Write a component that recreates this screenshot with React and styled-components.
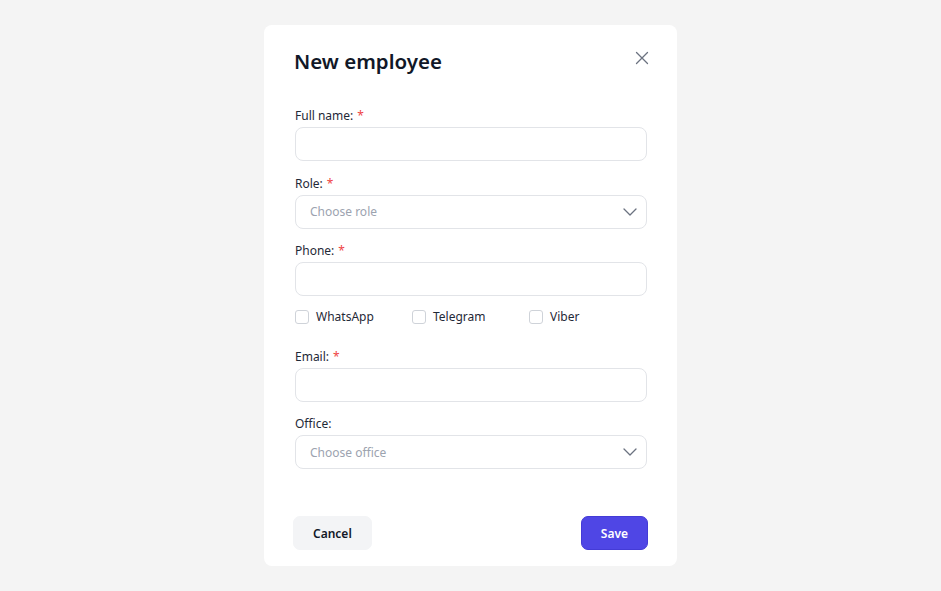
import styled, { createGlobalStyle } from "styled-components";

const GlobalStyle = createGlobalStyle`
  html, body {
    margin: 0;
    padding: 0;
    background: #f4f4f4;
    font-family: "Noto Sans", "Open Sans", sans-serif;
  }
  * { box-sizing: border-box; }
`;

const Page = styled.div`
  width: 941px;
  height: 591px;
  display: flex;
  justify-content: center;
  padding-top: 25px;
`;

const Modal = styled.div`
  width: 413px;
  height: 541px;
  background: #fff;
  border-radius: 8px;
  padding: 22px 30px 16px 30px;
  display: flex;
  flex-direction: column;
`;

const Header = styled.div`
  display: flex;
  align-items: center;
  justify-content: space-between;
  height: 28px;
  margin-bottom: 31px;
`;

const Title = styled.h2`
  margin: 0;
  font-size: 20.5px;
  font-weight: 600;
  color: #111827;
  line-height: 28px;
`;

const CloseButton = styled.button`
  border: 0;
  background: none;
  padding: 0;
  width: 14px;
  height: 14px;
  margin-right: -2px;
  margin-top: -6px;
  color: #6b7280;
  display: flex;
  cursor: pointer;
`;

const Form = styled.div`
  display: flex;
  flex-direction: column;
  gap: 12.5px;
  padding-left: 1px;
`;

const Field = styled.div`
  display: flex;
  flex-direction: column;
  gap: 2px;
`;

const Label = styled.label`
  font-size: 12px;
  line-height: 18px;
  padding-top: 1px;
  color: #1f2937;
`;

const Required = styled.span`
  color: #ef4444;
  margin-left: 4px;
`;

const Input = styled.input`
  width: 352px;
  height: 34px;
  border: 1px solid #e2e4e8;
  border-radius: 8px;
  padding: 0 14px;
  font-family: inherit;
  font-size: 12px;
  outline: none;
`;

const Select = styled.div`
  width: 352px;
  height: 34px;
  border: 1px solid #e2e4e8;
  border-radius: 8px;
  padding: 0 9px 0 14px;
  display: flex;
  align-items: center;
  justify-content: space-between;
  font-size: 12px;
  color: #9ca3af;
`;

const CheckRow = styled.div`
  display: grid;
  grid-template-columns: repeat(3, 117px);
  height: 16px;
  margin-top: -0.5px;
  margin-bottom: 10px;
`;

const CheckItem = styled.label`
  display: flex;
  align-items: center;
  gap: 7px;
  font-size: 12px;
  color: #1f2937;
`;

const Box = styled.span`
  width: 14px;
  height: 14px;
  border: 1px solid #cfd3d9;
  border-radius: 3px;
  background: #fff;
`;

const Footer = styled.div`
  margin-top: auto;
  display: flex;
  justify-content: space-between;
`;

const Button = styled.button`
  height: 34px;
  padding: 0 19px;
  border-radius: 7px;
  font-family: inherit;
  font-size: 12px;
  font-weight: 600;
  cursor: pointer;
  border: 1px solid ${(p) => (p.$primary ? "#443bd6" : "#f3f4f6")};
  background: ${(p) => (p.$primary ? "#4f46e5" : "#f3f4f6")};
  color: ${(p) => (p.$primary ? "#fff" : "#111827")};
  margin-left: ${(p) => (p.$primary ? "0" : "-1px")};
  margin-right: ${(p) => (p.$primary ? "-1px" : "0")};
`;

const Chevron = () => (
  <svg width="14" height="8" viewBox="0 0 14 8" fill="none">
    <path d="M1 1l6 6 6-6" stroke="#6b7280" strokeWidth="1.3" strokeLinecap="round" strokeLinejoin="round" />
  </svg>
);

function TextField({ label, required }) {
  return (
    <Field>
      <Label>
        {label}
        {required && <Required>*</Required>}
      </Label>
      <Input />
    </Field>
  );
}

function SelectField({ label, required, placeholder }) {
  return (
    <Field>
      <Label>
        {label}
        {required && <Required>*</Required>}
      </Label>
      <Select>
        <span>{placeholder}</span>
        <Chevron />
      </Select>
    </Field>
  );
}

export default function App() {
  return (
    <Page>
      <GlobalStyle />
      <Modal>
        <Header>
          <Title>New employee</Title>
          <CloseButton aria-label="Close">
            <svg width="14" height="14" viewBox="0 0 14 14" fill="none">
              <path d="M1.5 1.5l11 11M12.5 1.5l-11 11" stroke="currentColor" strokeWidth="1.3" strokeLinecap="round" />
            </svg>
          </CloseButton>
        </Header>
        <Form>
          <TextField label="Full name:" required />
          <SelectField label="Role:" required placeholder="Choose role" />
          <TextField label="Phone:" required />
          <CheckRow>
            {["WhatsApp", "Telegram", "Viber"].map((m) => (
              <CheckItem key={m}>
                <Box />
                {m}
              </CheckItem>
            ))}
          </CheckRow>
          <TextField label="Email:" required />
          <SelectField label="Office:" placeholder="Choose office" />
        </Form>
        <Footer>
          <Button>Cancel</Button>
          <Button $primary>Save</Button>
        </Footer>
      </Modal>
    </Page>
  );
}
